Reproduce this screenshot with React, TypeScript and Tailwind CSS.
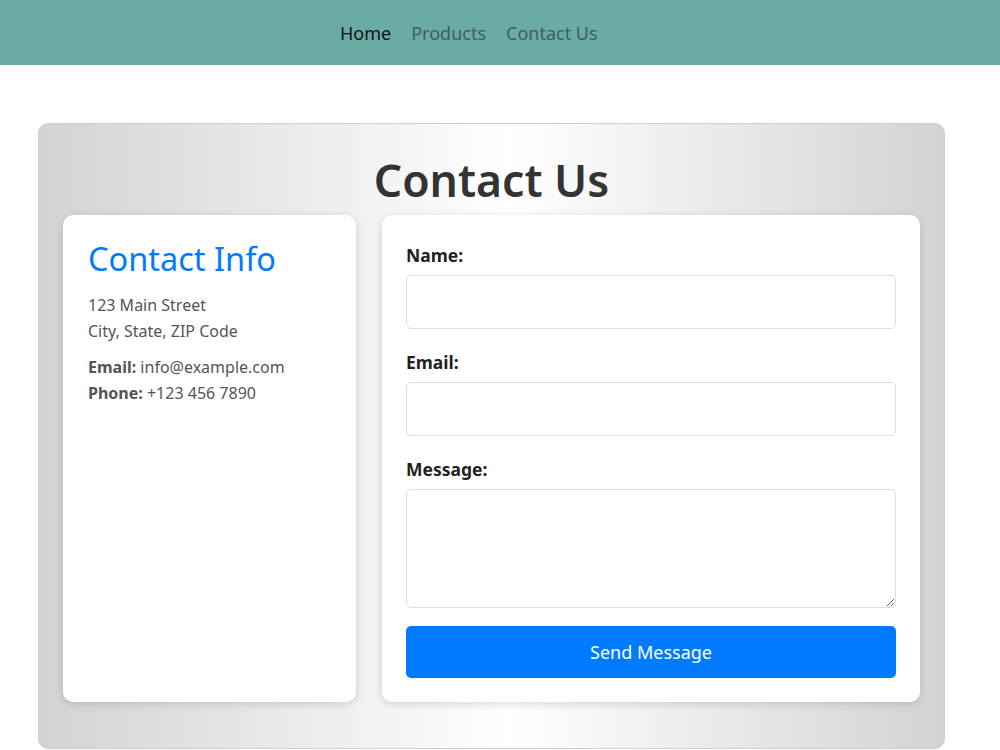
import React from "react"

const navItems = [
  { title: "Home", active: true },
  { title: "Products", active: false },
  { title: "Contact Us", active: false },
]

export default function App() {
  return (
    <div className="min-h-screen bg-white font-['Noto_Sans',sans-serif]">
      <nav className="h-[65px] bg-[#6aaba5] flex items-center pl-[340px]">
        <ul className="flex gap-[20px] text-[18px] pt-[2px]">
          {navItems.map((item) => (
            <li key={item.title} className={item.active ? "text-[#111]" : "text-[#3f5f5c]"}>
              {item.title}
            </li>
          ))}
        </ul>
      </nav>

      <div className="pt-[58px] pl-[38px] pr-[55px]">
        <div className="rounded-[10px] border border-[#cfcfcf] bg-[linear-gradient(to_right,#d3d3d3,#ffffff_52%,#d3d3d3)] px-[24px] h-[626px]">
          <h1 className="text-center text-[44.5px] font-semibold text-[#333] leading-[1.2] pt-[29px]">Contact Us</h1>

          <div className="flex gap-[26px] mt-[9px]">
            <div className="w-[293px] h-[487px] rounded-[10px] bg-white shadow-[0_2px_8px_rgba(0,0,0,0.15)] px-[25px] pt-[24px]">
              <h2 className="text-[32.5px] text-[#007bff] leading-[1.25] mb-[12px]">Contact Info</h2>
              <p className="text-[16px] text-[#555] leading-[26px] mb-[10px]">
                123 Main Street<br />City, State, ZIP Code
              </p>
              <p className="text-[16px] text-[#555] leading-[26px]">
                <strong className="font-bold">Email:</strong> info@example.com<br />
                <strong className="font-bold">Phone:</strong> +123 456 7890
              </p>
            </div>

            <form className="flex-1 h-[487px] rounded-[10px] bg-white shadow-[0_2px_8px_rgba(0,0,0,0.15)] px-[24px] pt-[27px]" onSubmit={(e) => e.preventDefault()}>
              <div className="mb-[20px]">
                <label className="block text-[17.5px] font-bold text-[#222] leading-[26px] mb-[7px]">Name:</label>
                <input type="text" className="block w-full h-[54px] rounded-[5px] border border-[#ddd] outline-none" />
              </div>
              <div className="mb-[20px]">
                <label className="block text-[17.5px] font-bold text-[#222] leading-[26px] mb-[7px]">Email:</label>
                <input type="email" className="block w-full h-[54px] rounded-[5px] border border-[#ddd] outline-none" />
              </div>
              <div className="mb-[18px]">
                <label className="block text-[17.5px] font-bold text-[#222] leading-[26px] mb-[7px]">Message:</label>
                <textarea className="block w-full h-[119px] rounded-[5px] border border-[#ddd] outline-none" />
              </div>
              <button type="submit" className="w-full h-[52px] rounded-[5px] bg-[#007bff] text-white text-[18px]">
                Send Message
              </button>
            </form>
          </div>
        </div>
      </div>
    </div>
  )
}
